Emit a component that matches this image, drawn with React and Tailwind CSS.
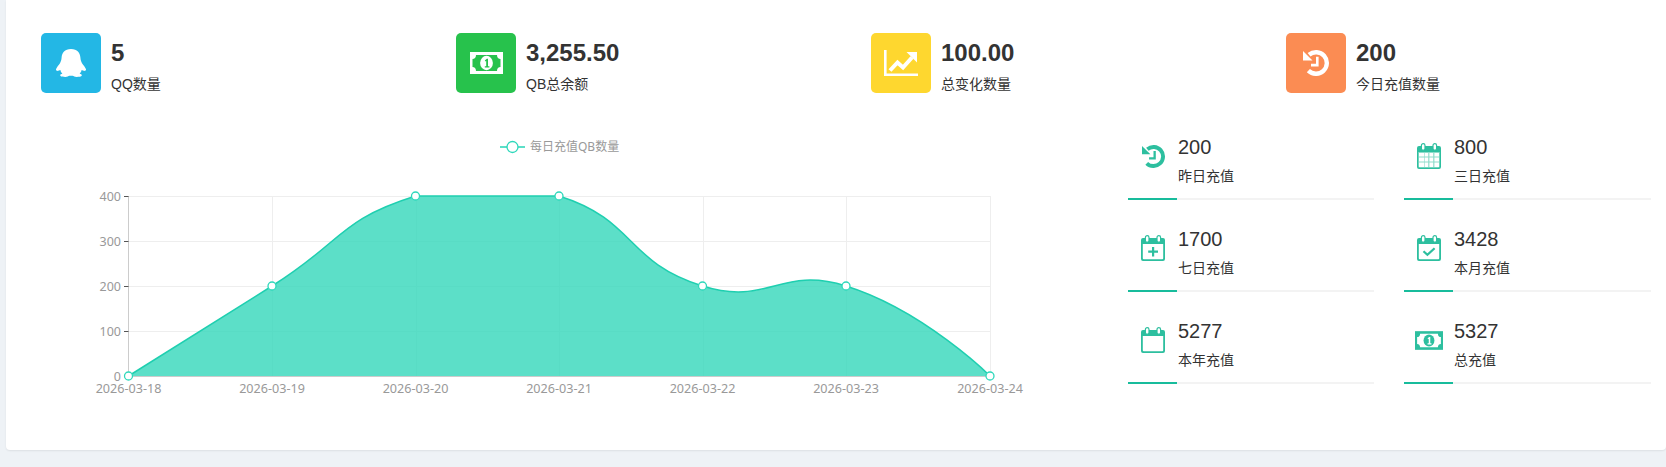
import React from 'react'

const FONT = "font-['Liberation_Sans','Noto_Sans_CJK_SC',sans-serif]"

const TOP = 195
const points = [
  [128.5, 375],
  [272, 285],
  [415.5, TOP],
  [559, TOP],
  [702.5, 285],
  [846, 285],
  [990, 375],
]
const dates = ['2026-03-18', '2026-03-19', '2026-03-20', '2026-03-21', '2026-03-22', '2026-03-23', '2026-03-24']

// same control points as a smoothed line chart, never above the top of the plot
function control(pts, i, dir, smooth) {
  const p = pts[i]
  const prev = pts[i - 1]
  const next = pts[i + 1]
  if (!prev || !next) return p
  const a = Math.hypot(p[0] - prev[0], p[1] - prev[1])
  const b = Math.hypot(next[0] - p[0], next[1] - p[1])
  const ratio = dir > 0 ? b / (a + b) : a / (a + b)
  const y = p[1] + dir * (next[1] - prev[1]) * smooth * ratio
  return [p[0] + dir * (next[0] - prev[0]) * smooth * ratio, Math.max(y, TOP)]
}

function smoothPath(pts, smooth = 0.5) {
  let d = `M${pts[0][0]} ${pts[0][1]}`
  for (let i = 0; i < pts.length - 1; i++) {
    const q = pts[i + 1]
    d += ` C${control(pts, i, 1, smooth).join(' ')} ${control(pts, i + 1, -1, smooth).join(' ')} ${q[0]} ${q[1]}`
  }
  return d
}

function PenguinIcon() {
  return (
    <svg width="30" height="28" viewBox="0 0 30 28" fill="#fff">
      <path d="M15 0C8.6 0 6 3.6 5.6 8.6C5.4 11.2 5 12.4 4 14.2C2.8 16 .4 18.6 0 20.2C-.2 21.6 .8 22.2 2.2 21.8L4.4 21C4.6 22.6 5.2 23.6 6.4 24.4C5 25 4 25.6 4.2 26.6C4.6 27.8 7 28 9.4 28C11.2 28 12.4 27.2 13.4 26.8H16.6C17.6 27.2 18.8 28 20.6 28C23 28 25.4 27.8 25.8 26.6C26 25.6 25 25 23.6 24.4C24.8 23.6 25.4 22.6 25.6 21L27.8 21.8C29.2 22.2 30.2 21.6 30 20.2C29.6 18.6 27.2 16 26 14.2C25 12.4 24.6 11.2 24.4 8.6C24 3.6 21.4 0 15 0Z" />
    </svg>
  )
}

function BillIcon({ width, height, inner, outer }) {
  return (
    <svg width={width} height={height} viewBox="0 0 33 22">
      <rect width="33" height="22" fill={outer} />
      <path
        d="M6 3H27C27 5.6 28.4 7 30.5 7V15C28.4 15 27 16.4 27 19H6C6 16.4 4.6 15 2.5 15V7C4.6 7 6 5.6 6 3Z"
        fill={inner}
      />
      <ellipse cx="16.5" cy="11" rx="6.4" ry="7.2" fill={outer} />
      <path d="M14.8 8.4L16.8 6.8H18V14.2H19.4V15.6H14.8V14.2H16.2V8.9L15.5 9.6Z" fill={inner} />
    </svg>
  )
}

function ChartIcon() {
  return (
    <svg width="34" height="26" viewBox="0 0 34 26" fill="none" stroke="#fff">
      <path d="M1.3 0V24.7H34" strokeWidth="2.6" />
      <path d="M6 20.5L13.5 12.5L19 17.5L28 7.5" strokeWidth="4" />
      <path d="M22.5 2H33V12.5Z" fill="#fff" stroke="none" />
    </svg>
  )
}

function HistoryIcon({ size = 26 }) {
  return (
    <svg width={size} height={size} viewBox="0 0 26 26">
      <path d="M6.06 4.73A10.8 10.8 0 1 1 5.36 20.64" fill="none" stroke="currentColor" strokeWidth="4.4" />
      <path d="M0 1V10.5H9.5Z" fill="currentColor" />
      <path d="M13 6.8H15.6V16.4H8V13.8H13Z" fill="currentColor" />
    </svg>
  )
}

function CalendarIcon({ children }) {
  return (
    <svg width="24" height="26" viewBox="0 0 24 26" className="text-[#2dbf9f]">
      <path
        d="M2 3H22A2 2 0 0 1 24 5V24A2 2 0 0 1 22 26H2A2 2 0 0 1 0 24V5A2 2 0 0 1 2 3ZM1.8 9V23.2A1 1 0 0 0 2.8 24.2H21.2A1 1 0 0 0 22.2 23.2V9Z"
        fill="currentColor"
        fillRule="evenodd"
      />
      <rect x="4.4" y="0.6" width="3.6" height="6.6" rx="1.8" fill="#fff" stroke="currentColor" strokeWidth="1.2" />
      <rect x="16" y="0.6" width="3.6" height="6.6" rx="1.8" fill="#fff" stroke="currentColor" strokeWidth="1.2" />
      {children}
    </svg>
  )
}

function SmallIcon({ name }) {
  if (name === 'history') {
    return (
      <span className="text-[#2dbf9f]">
        <HistoryIcon size={23} />
      </span>
    )
  }
  if (name === 'grid') {
    return (
      <CalendarIcon>
        <path d="M1.5 9H22.5V24.4H1.5Z" fill="#8fdccb" />
        <path d="M2 10H7V13.4H2ZM7.6 10H11.2V13.4H7.6ZM12.4 10H16.2V13.4H12.4ZM17.4 10H22V13.4H17.4ZM2 14.4H7V18.4H2ZM7.6 14.4H11.2V18.4H7.6ZM12.4 14.4H16.2V18.4H12.4ZM17.4 14.4H22V18.4H17.4ZM2 19.4H7V24H2ZM7.6 19.4H11.2V24H7.6ZM12.4 19.4H16.2V24H12.4ZM17.4 19.4H22V24H17.4Z" fill="#fff" />
      </CalendarIcon>
    )
  }
  if (name === 'plus') {
    return (
      <CalendarIcon>
        <path d="M11 12H13.2V15.6H17V17.8H13.2V21.4H11V17.8H7.2V15.6H11Z" fill="currentColor" />
      </CalendarIcon>
    )
  }
  if (name === 'check') {
    return (
      <CalendarIcon>
        <path d="M6.5 16.2L10.4 19.8L17.6 13.2" fill="none" stroke="currentColor" strokeWidth="2.2" />
      </CalendarIcon>
    )
  }
  if (name === 'bill') {
    return <BillIcon width={28} height={19} outer="#2dbf9f" inner="#fff" />
  }
  return <CalendarIcon />
}

function Stat({ color, icon, value, label }) {
  return (
    <div className="flex gap-[10px]">
      <div className={`w-[60px] h-[60px] rounded-[5px] flex items-center justify-center ${color}`}>{icon}</div>
      <div className="pt-[5px]">
        <div className="text-2xl leading-[30px] font-bold text-[#333]">{value}</div>
        <div className="mt-[6px] text-sm leading-5 text-[#333]">{label}</div>
      </div>
    </div>
  )
}

function MiniStat({ icon, value, label }) {
  return (
    <div className="h-[74px] flex flex-col justify-between">
      <div className="flex pt-[9px]">
        <div className="w-[50px] h-[26px] mt-[8px] flex justify-center items-center shrink-0">
          <SmallIcon name={icon} />
        </div>
        <div>
          <div className="text-[20px] leading-6 text-[#333]">{value}</div>
          <div className="mt-[7px] text-sm leading-5 text-[#333]">{label}</div>
        </div>
      </div>
      <div className="h-[2px] bg-[#f3f3f3]">
        <div className="h-[2px] w-1/5 bg-[#18bc9c]"></div>
      </div>
    </div>
  )
}

function Chart() {
  const line = smoothPath(points)
  const area = `${line} L128.5 375 Z`
  const labelFont = "'Noto Sans','Noto Sans CJK SC',sans-serif"
  return (
    <svg width="1087" height="300" viewBox="41 125 1087 300" className="block shrink-0">
      <g stroke="#eeeeee" strokeWidth="1">
        {[195, 240, 285, 330].map((y) => (
          <line key={y} x1="128.5" x2="990.5" y1={y + 0.5} y2={y + 0.5} />
        ))}
        {points.slice(1).map(([x]) => (
          <line key={x} x1={Math.round(x) + 0.5} x2={Math.round(x) + 0.5} y1="195" y2="375" />
        ))}
      </g>
      <path d={area} fill="#33d7ba" fillOpacity="0.8" />
      <path d={line} fill="none" stroke="#1fcfb0" strokeWidth="1.5" />
      <line x1="128.5" x2="128.5" y1="195" y2="375.5" stroke="#cccccc" />
      <line x1="128" x2="990.5" y1="375.5" y2="375.5" stroke="#cccccc" />
      {[195, 240, 285, 330, 375].map((y) => (
        <line key={y} x1="124" x2="128.5" y1={y + 0.5} y2={y + 0.5} stroke="#555555" />
      ))}
      {[400, 300, 200, 100, 0].map((v, i) => (
        <text key={v} x="121" y={195 + i * 45 + 4.5} textAnchor="end" fontSize="12.5" fill="#999999" fontFamily={labelFont}>
          {v}
        </text>
      ))}
      {dates.map((d, i) => (
        <text key={d} x={points[i][0]} y="392" textAnchor="middle" fontSize="12.6" fill="#999999" fontFamily={labelFont}>
          {d}
        </text>
      ))}
      {points.map(([x, y]) => (
        <circle key={x} cx={x} cy={y} r="4" fill="#fff" stroke="#2ed8bb" strokeWidth="1.3" />
      ))}
      <line x1="500" x2="525" y1="146" y2="146" stroke="#5cdfc8" strokeWidth="2" />
      <circle cx="512.5" cy="146" r="5.5" fill="#fff" stroke="#2ed8bb" strokeWidth="1.3" />
      <text x="530" y="149.5" fontSize="12" fill="#999999" fontFamily={labelFont}>
        每日充值QB数量
      </text>
    </svg>
  )
}

export default function App() {
  return (
    <div className={`h-[467px] overflow-hidden bg-[#eef2f6] pl-[6px] ${FONT}`}>
      <div className="h-[450px] bg-white rounded-b-[4px] shadow-[0_1px_2px_rgba(0,0,0,0.08)] pt-[33px] pl-[35px]">
        <div className="grid grid-cols-[415px_415px_415px_1fr]">
          <Stat color="bg-[#23b7e5]" icon={<PenguinIcon />} value="5" label="QQ数量" />
          <Stat
            color="bg-[#27c24c]"
            icon={<BillIcon width={33} height={22} outer="#fff" inner="#27c24c" />}
            value="3,255.50"
            label="QB总余额"
          />
          <Stat color="bg-[#fed72f]" icon={<ChartIcon />} value="100.00" label="总变化数量" />
          <Stat
            color="bg-[#fb8c53]"
            icon={
              <span className="text-white">
                <HistoryIcon />
              </span>
            }
            value="200"
            label="今日充值数量"
          />
        </div>
        <div className="flex mt-[32px]">
          <Chart />
          <div className="grid grid-cols-[246px_247px] gap-x-[30px] gap-y-[18px] content-start">
            <MiniStat icon="history" value="200" label="昨日充值" />
            <MiniStat icon="grid" value="800" label="三日充值" />
            <MiniStat icon="plus" value="1700" label="七日充值" />
            <MiniStat icon="check" value="3428" label="本月充值" />
            <MiniStat icon="blank" value="5277" label="本年充值" />
            <MiniStat icon="bill" value="5327" label="总充值" />
          </div>
        </div>
      </div>
    </div>
  )
}
